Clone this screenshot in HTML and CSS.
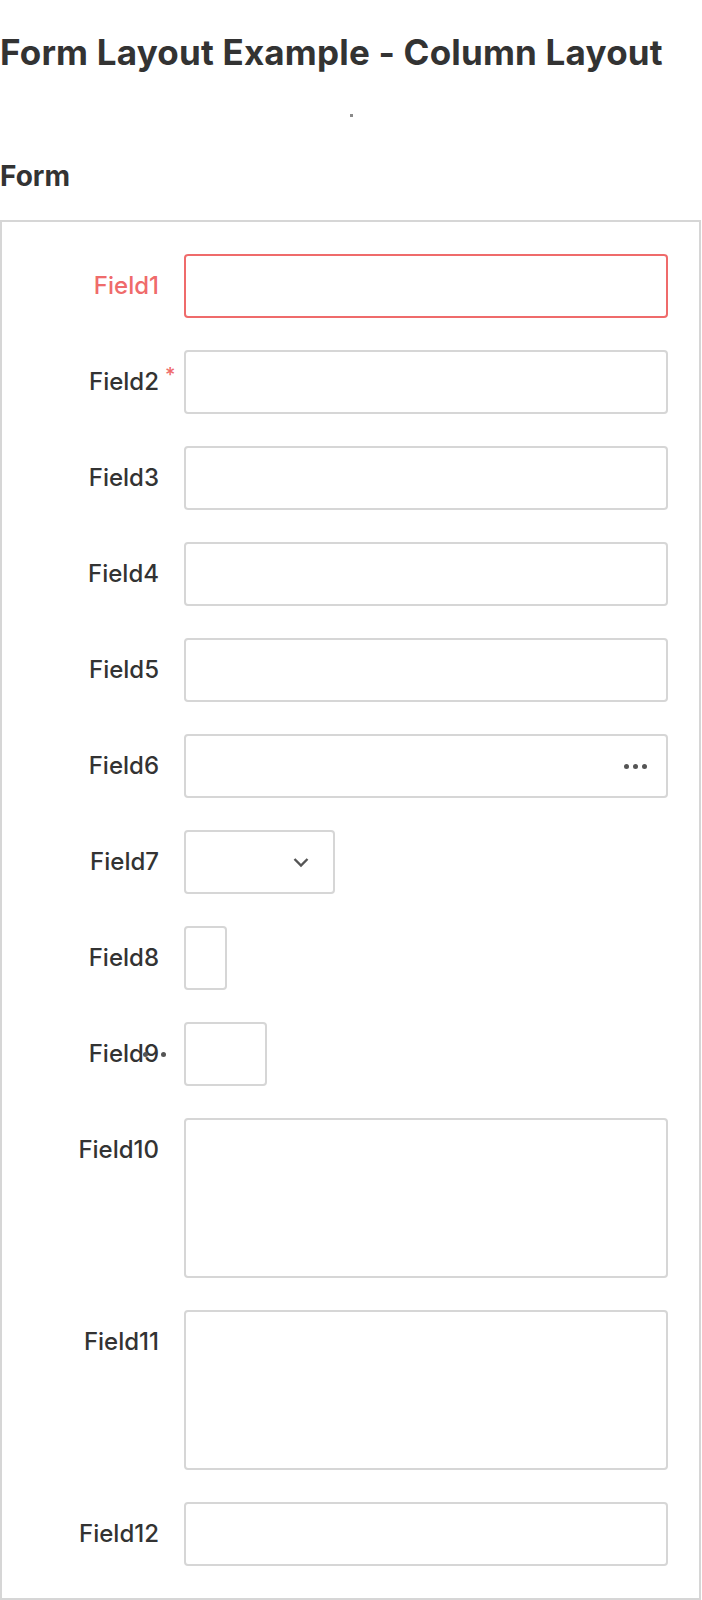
FILE: index.html
```html
<!DOCTYPE html>
<html lang="en">
<head>
<meta charset="utf-8">
<title>Form Layout Example - Column Layout</title>
<link rel="stylesheet" href="styles.css">
</head>
<body>
<h1 class="title">Form Layout Example - Column Layout</h1>
<div class="mark-row"><span class="mark"></span></div>
<div class="section-title">Form</div>
<div class="form-box">
  <div class="row">
    <label class="label label-invalid">Field1</label>
    <div class="field"><input class="input input-invalid" type="text"></div>
  </div>
  <div class="row">
    <label class="label"><span class="label-text">Field2<span class="req">*</span></span></label>
    <div class="field"><input class="input" type="text"></div>
  </div>
  <div class="row">
    <label class="label">Field3</label>
    <div class="field"><input class="input" type="text"></div>
  </div>
  <div class="row">
    <label class="label">Field4</label>
    <div class="field"><input class="input" type="text"></div>
  </div>
  <div class="row">
    <label class="label">Field5</label>
    <div class="field"><input class="input" type="text"></div>
  </div>
  <div class="row">
    <label class="label">Field6</label>
    <div class="field">
      <div class="input input-dots">
        <span class="dots"><i></i><i></i><i></i></span>
      </div>
    </div>
  </div>
  <div class="row">
    <label class="label">Field7</label>
    <div class="field">
      <div class="input select">
        <svg class="chevron" width="18" height="11" viewBox="0 0 18 11"><path d="M2.5 2 L9 8.5 L15.5 2" fill="none" stroke="#555" stroke-width="2.4"/></svg>
      </div>
    </div>
  </div>
  <div class="row">
    <label class="label">Field8</label>
    <div class="field"><div class="input input-xs"></div></div>
  </div>
  <div class="row">
    <label class="label"><span class="label-text">Field9<span class="overlay-dots"><i></i><i></i></span></span></label>
    <div class="field"><div class="input input-s"></div></div>
  </div>
  <div class="row">
    <label class="label">Field10</label>
    <div class="field"><textarea class="input area"></textarea></div>
  </div>
  <div class="row">
    <label class="label">Field11</label>
    <div class="field"><textarea class="input area"></textarea></div>
  </div>
  <div class="row">
    <label class="label">Field12</label>
    <div class="field"><input class="input" type="text"></div>
  </div>
</div>
</body>
</html>
```
FILE: styles.css
```css
html, body {
  margin: 0;
  padding: 0;
  background: #fff;
}

body {
  font-family: Inter, "Noto Sans", "DejaVu Sans", sans-serif;
  color: #333;
}

.title {
  margin: 32px 0 0;
  font-size: 35px;
  line-height: 40px;
  letter-spacing: 0.2px;
  font-weight: 700;
  color: #333;
}

.mark-row {
  display: flex;
  justify-content: center;
  padding-top: 42px;
  height: 3px;
}

.mark {
  display: block;
  width: 3px;
  height: 3px;
  background: #8a8a8a;
}

.section-title {
  margin-top: 43px;
  font-size: 28px;
  line-height: 32px;
  font-weight: 700;
  color: #333;
}

.form-box {
  margin-top: 28px;
  width: 701px;
  box-sizing: border-box;
  border: 2px solid #d6d6d6;
  padding: 32px 31px 32px 0;
  display: flex;
  flex-direction: column;
  gap: 32px;
}

.row {
  display: grid;
  grid-template-columns: 182px 1fr;
  align-items: start;
}

.label {
  font-size: 24px;
  font-weight: 500;
  line-height: 64px;
  text-align: right;
  padding-right: 25px;
  color: #333;
}

.label-invalid {
  color: #ef6b6b;
}

.label-text {
  position: relative;
  display: inline-block;
}

.req {
  position: absolute;
  left: calc(100% + 6px);
  top: 15px;
  font-size: 20px;
  line-height: 20px;
  height: 20px;
  color: #ef6b6b;
}

.overlay-dots {
  position: absolute;
  left: calc(100% - 16.5px);
  top: 30px;
  display: flex;
  gap: 13px;
}

.overlay-dots i,
.dots i {
  display: block;
  width: 5px;
  height: 5px;
  border-radius: 50%;
  background: #555;
}

.field {
  min-width: 0;
}

.input {
  display: block;
  width: 100%;
  height: 64px;
  box-sizing: border-box;
  border: 2px solid #d6d6d6;
  border-radius: 4px;
  background: #fff;
  margin: 0;
  padding: 0 12px;
  font: inherit;
  outline: none;
}

.input-invalid {
  border-color: #ef6b6b;
}

.input-dots {
  display: flex;
  align-items: center;
  justify-content: flex-end;
  padding-right: 19px;
}

.dots {
  display: flex;
  gap: 4px;
}

.select {
  width: 151px;
  display: flex;
  align-items: center;
  justify-content: flex-end;
  padding-right: 23px;
}

.chevron {
  display: block;
}

.input-xs {
  width: 43px;
}

.input-s {
  width: 83px;
}

.area {
  height: 160px;
  resize: none;
  padding: 12px;
}
```
